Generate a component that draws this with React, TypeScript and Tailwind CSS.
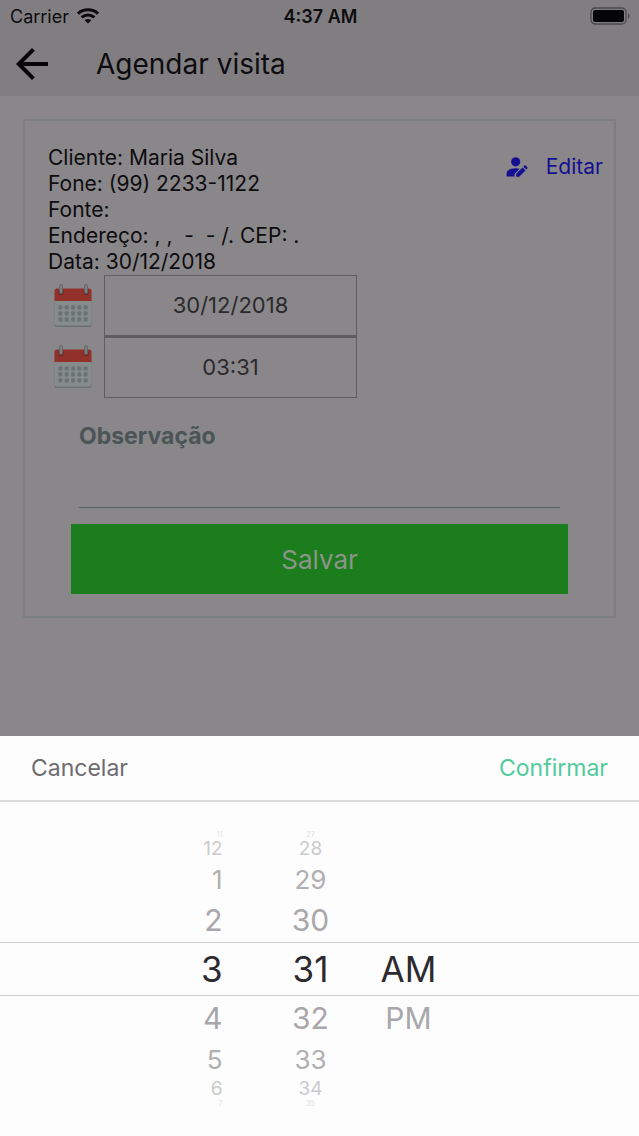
import { useState } from "react"
import { MdArrowBack } from "react-icons/md"

type WheelRow = { value: string; className: string }

const rowStyles = [
  "h-[7px] text-[7px] leading-[7px] text-[#dddcde] items-center",
  "h-[22px] text-[19px] leading-[22px] text-[#cbcacc] items-center",
  "h-[38px] text-[26px] text-[#b0afb2] items-center",
  "h-[44px] text-[30px] text-[#a8a7aa] items-center",
  "h-[54px] text-[35px] text-[#2c2a2e] items-center",
  "h-[44px] text-[30px] text-[#a8a7aa] items-center",
  "h-[38px] text-[26px] text-[#b0afb2] items-center",
  "h-[22px] text-[19px] leading-[22px] text-[#cbcacc] items-center",
  "h-[7px] text-[7px] leading-[7px] text-[#dddcde] items-center",
]

const toRows = (values: string[]): WheelRow[] =>
  values.map((value, i) => ({ value, className: rowStyles[i] }))

const hours = toRows(["11", "12", "1", "2", "3", "4", "5", "6", "7"])
const minutes = toRows(["27", "28", "29", "30", "31", "32", "33", "34", "35"])
const periods = toRows(["", "", "", "", "AM", "PM", "", "", ""])

function Wheel({ label, rows, align }: { label: string; rows: WheelRow[]; align: string }) {
  return (
    <div role="group" aria-label={label} className="flex w-[98px] flex-col">
      {rows.map((row, i) =>
        row.value ? (
          <button key={i} type="button" className={`flex w-full ${align} ${row.className}`}>
            {row.value}
          </button>
        ) : (
          <div key={i} className={row.className} />
        )
      )}
    </div>
  )
}

function WifiIcon() {
  return (
    <svg viewBox="0 0 22 16" className="h-4 w-[22px]" fill="none" stroke="#0b0a0c" strokeWidth="3">
      <path d="M1 5.6C6.6.6 15.4.6 21 5.6" />
      <path d="M4.6 9.4c3.7-3.2 9.1-3.2 12.8 0" />
      <path d="M11 15.6 7.6 12.2c1.9-1.7 4.9-1.7 6.8 0z" fill="#0b0a0c" stroke="none" />
    </svg>
  )
}

function BatteryIcon() {
  return (
    <svg viewBox="0 0 41 18" className="h-[18px] w-[41px]">
      <rect x="1" y="1" width="35" height="16" rx="4" fill="none" stroke="#4b494c" strokeWidth="1.3" />
      <rect x="3" y="3" width="31" height="12" rx="2" fill="#050406" />
      <path d="M38 6.2c2 .8 2 4.8 0 5.6z" fill="#4b494c" />
    </svg>
  )
}

function AccountEditIcon() {
  return (
    <svg viewBox="0 0 22 20" className="h-5 w-[22px]" fill="currentColor">
      <circle cx="9.7" cy="4.8" r="4.6" />
      <path d="M.6 19.600v-3.200c0-3.200 4.400-5.200 9.100-5.200 1.400 0 2.700.2 3.900.5l-5.100 5.200v2.700z" />
      <path d="M10.200 19.800v-3l6.300-6.400 3 3-6.300 6.400z" />
      <path d="m17.300 9.700 1.100-1.100c.4-.4.9-.4 1.300 0l1.600 1.600c.4.4.4.9 0 1.300l-1.100 1.100z" />
    </svg>
  )
}

function CalendarIcon() {
  return (
    <svg viewBox="0 0 38 44" className="h-[44px] w-[38px] shrink-0">
      <rect x="0.5" y="5" width="37" height="38" rx="2.5" fill="#687272" />
      <rect x="0.5" y="5" width="37" height="36.5" rx="2.5" fill="#858c8b" />
      <path d="M.5 17V7A2.500 2.500 0 0 1 3 4.500h32A2.500 2.500 0 0 1 37.500 7v10z" fill="#92302a" />
      {[5, 30].map((x) => (
        <g key={x}>
          <rect x={x - 0.5} y="4.500" width="5" height="6.500" rx="2.500" fill="#5e2a29" />
          <rect x={x + 0.5} y="0.5" width="3" height="9" rx="1.500" fill="#7c7e7e" stroke="#626364" strokeWidth="0.8" />
        </g>
      ))}
      {[21.2, 27.2, 33.2].map((y) =>
        [4.5, 10.8, 17.1, 23.4, 29.7].map((x) => (
          <rect key={`${x}-${y}`} x={x} y={y} width="3.800" height="4.400" rx="1" fill="#697275" />
        ))
      )}
    </svg>
  )
}

export default function App() {
  const [note, setNote] = useState("")

  return (
    <div className="flex min-h-screen flex-col bg-[#8a878a] font-['Inter','Liberation_Sans',sans-serif] text-[#0d0c0e]">
      <header className="bg-[#817e81]">
        <div className="grid h-8 grid-cols-3 items-center pr-2 pl-[10px]">
          <div className="flex items-center gap-2 text-[18px]">
            <span>Carrier</span>
            <WifiIcon />
          </div>
          <span className="text-center text-[18px] font-semibold">4:37 AM</span>
          <div className="flex justify-end">
            <BatteryIcon />
          </div>
        </div>
        <div className="flex h-16 items-center pl-2">
          <button type="button" aria-label="Voltar" className="text-[#050406]">
            <MdArrowBack size={48} />
          </button>
          <h1 className="ml-10 text-[28px]">Agendar visita</h1>
        </div>
      </header>

      <main className="flex-1 px-[23px] pt-[23px] pb-8">
        <section className="border-2 border-[#7c7f82] pt-6 pb-[22px]">
          <div className="flex justify-between pr-[11px] pl-[23px]">
            <div className="text-[21px] leading-[26px] whitespace-pre">
              <p>Cliente: Maria Silva</p>
              <p>Fone: (99) 2233-1122</p>
              <p>Fonte:</p>
              <p>Endereço: , ,  -  - /. CEP: .</p>
              <p>Data: 30/12/2018</p>
            </div>
            <button type="button" className="mt-[6px] flex items-center gap-[18px] self-start text-[21px] text-[#150f92]">
              <AccountEditIcon />
              Editar
            </button>
          </div>

          <div className="flex flex-col pl-[29px] text-[22px] text-[#2b2a2c]">
            <div className="flex items-center gap-3">
              <CalendarIcon />
              <button type="button" className="h-[61px] w-[253px] border border-[#5f5d60]">30/12/2018</button>
            </div>
            <div className="flex items-center gap-3">
              <CalendarIcon />
              <button type="button" className="h-[62px] w-[253px] border border-t-2 border-[#5f5d60]">03:31</button>
            </div>
          </div>

          <div className="mx-[54px] mt-[22px] flex flex-col">
            <label htmlFor="note" className="text-[23px] leading-8 font-bold text-[#4b5556]">
              Observação
            </label>
            <input
              id="note"
              value={note}
              onChange={(e) => setNote(e.target.value)}
              className="h-14 border-b border-[#596467] bg-transparent text-[22px] outline-none"
            />
          </div>
          <div className="mx-[46px] mt-4">
            <button type="button" className="h-[70px] w-full bg-[#1c7d1c] text-[26px] text-[#8d958b]">
              Salvar
            </button>
          </div>
        </section>
      </main>

      <div role="dialog" aria-label="Horário" className="bg-[#fefdfe]">
        <div className="flex h-[66px] items-center justify-between border-b-2 border-[#d9d8da] px-[31px] text-[23px]">
          <button type="button" className="text-[#6d6b6f]">Cancelar</button>
          <button type="button" className="text-[#50cb9b]">Confirmar</button>
        </div>
        <div className="grid h-[334px] grid-cols-1">
          <div className="col-start-1 row-start-1 mt-[140px] h-[54px] border-y border-[#cfced0]" />
          <div className="col-start-1 row-start-1 flex justify-center pt-[29px] pr-[18px]">
            <Wheel label="Hora" rows={hours} align="justify-end pr-[39px]" />
            <Wheel label="Minuto" rows={minutes} align="justify-center" />
            <Wheel label="Período" rows={periods} align="justify-center" />
          </div>
        </div>
      </div>
    </div>
  )
}
